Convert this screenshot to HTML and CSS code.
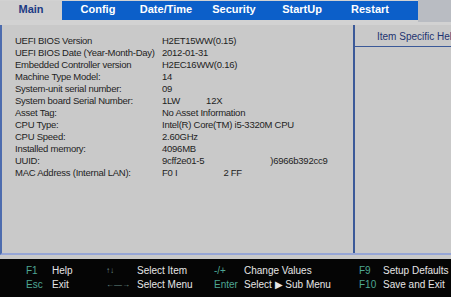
FILE: index.html
```html
<!DOCTYPE html>
<html lang="en">
<head>
    <meta charset="UTF-8">
    <title>BIOS Setup Utility</title>
    <link rel="stylesheet" href="styles.css">
</head>
<body>
    <div class="screen">
        <div class="tabbar">
            <div class="tab active">Main</div>
            <div class="tab-group">
                <div class="tab">Config</div>
                <div class="tab">Date/Time</div>
                <div class="tab">Security</div>
                <div class="tab">StartUp</div>
                <div class="tab">Restart</div>
            </div>
            <div class="tab-rest"></div>
        </div>

        <div class="panel">
            <div class="info">
                <div class="row"><span class="label">UEFI BIOS Version</span><span class="value">H2ET15WW(0.15)</span></div>
                <div class="row"><span class="label">UEFI BIOS Date (Year-Month-Day)</span><span class="value">2012-01-31</span></div>
                <div class="row"><span class="label">Embedded Controller version</span><span class="value">H2EC16WW(0.16)</span></div>
                <div class="row"><span class="label">Machine Type Model:</span><span class="value">14</span></div>
                <div class="row"><span class="label">System-unit serial number:</span><span class="value">09</span></div>
                <div class="row"><span class="label">System board Serial Number:</span><span class="value">1LW<span class="gap g1">12X</span></span></div>
                <div class="row"><span class="label">Asset Tag:</span><span class="value">No Asset Information</span></div>
                <div class="row"><span class="label">CPU Type:</span><span class="value">Intel(R) Core(TM) i5-3320M CPU</span></div>
                <div class="row"><span class="label">CPU Speed:</span><span class="value">2.60GHz</span></div>
                <div class="row"><span class="label">Installed memory:</span><span class="value">4096MB</span></div>
                <div class="row"><span class="label">UUID:</span><span class="value">9cff2e01-5<span class="gap g2">)6966b392cc9</span></span></div>
                <div class="row"><span class="label">MAC Address (Internal LAN):</span><span class="value">F0 I<span class="gap g3">2 FF</span></span></div>
            </div>
            <div class="help">
                <div class="help-title">Item Specific Help</div>
            </div>
        </div>

        <div class="footer">
            <div class="keys">
                <div class="key-col">
                    <div class="key-row"><span class="key">F1</span><span class="act">Help</span></div>
                    <div class="key-row"><span class="key">Esc</span><span class="act">Exit</span></div>
                </div>
                <div class="key-col c2">
                    <div class="key-row"><span class="key arrow">&#8593;&#8595;</span><span class="act">Select Item</span></div>
                    <div class="key-row"><span class="key arrow">&#8592;&#8212;&#8594;</span><span class="act">Select Menu</span></div>
                </div>
                <div class="key-col c3">
                    <div class="key-row"><span class="key">-/+</span><span class="act">Change Values</span></div>
                    <div class="key-row"><span class="key">Enter</span><span class="act">Select &#9654; Sub Menu</span></div>
                </div>
                <div class="key-col c4">
                    <div class="key-row"><span class="key">F9</span><span class="act">Setup Defaults</span></div>
                    <div class="key-row"><span class="key">F10</span><span class="act">Save and Exit</span></div>
                </div>
            </div>
        </div>
    </div>
</body>
</html>
```

FILE: styles.css
```css
* {
    margin: 0;
    padding: 0;
    box-sizing: border-box;
}

body {
    font-family: "Liberation Sans", Arial, sans-serif;
    background: #c9c9c9;
    width: 451px;
    height: 297px;
    overflow: hidden;
}

.screen {
    display: flex;
    flex-direction: column;
    height: 297px;
}

/* top menu */
.tabbar {
    display: flex;
    flex-shrink: 0;
    height: 25px;
    background: #d2d2d2;
}

.tab {
    font-size: 11px;
    font-weight: bold;
    color: #ffffff;
    height: 19px;
    line-height: 17px;
    text-align: center;
    width: 68px;
}

.tab.active {
    width: 62px;
    color: #1c3b84;
    background: #cfcfcf;
    margin-top: 1px;
}

.tab-group {
    display: flex;
    background: #0c5fc9;
    height: 19px;
    margin-top: 1px;
    width: 356px;
    padding-left: 2px;
}

.tab-rest {
    flex: 1;
    background: #b9bcc2;
    height: 22px;
}

/* main panel */
.panel {
    display: flex;
    flex-shrink: 0;
    height: 230px;
    border-left: 2px solid #4d6cae;
    border-bottom: 2px solid #97a6d6;
    background: #c9c9c9;
}

.info {
    width: 353px;
    flex-shrink: 0;
    border-right: 2px solid #3b5998;
    padding: 10px 0 0 13px;
}

.row {
    display: flex;
    font-size: 9.5px;
    line-height: 12px;
    color: #1e1e1e;
    white-space: nowrap;
    letter-spacing: -0.25px;
}

.label {
    width: 147px;
    flex-shrink: 0;
}

.gap {
    display: inline-block;
}

.g1 { margin-left: 26px; }
.g2 { margin-left: 66px; }
.g3 { margin-left: 46px; }

.help {
    flex: 1;
    min-width: 0;
}

.help-title {
    height: 22px;
    border-bottom: 1px solid #3b5998;
    font-size: 10px;
    color: #1d3370;
    padding: 6px 0 0 22px;
    white-space: nowrap;
    overflow: hidden;
}

/* key legend */
.footer {
    flex: 1;
    margin-top: 4px;
    background: #050505;
    padding: 5px 0 0 0;
}

.keys {
    display: flex;
    white-space: nowrap;
}

.key-col {
    display: flex;
    flex-direction: column;
    flex-shrink: 0;
    width: 94px;
    padding-left: 26px;
}

.key-row {
    display: flex;
    font-size: 10px;
    line-height: 14px;
}

.key {
    color: #4ea793;
    width: 26px;
    flex-shrink: 0;
}

.act {
    color: #e6e6e6;
}

.key-col.c2 {
    width: 112px;
    padding-left: 12px;
}

.key-col.c2 .key {
    width: 31px;
    font-size: 8px;
    color: #6e8f8a;
}

.key-col.c3 {
    width: 143px;
    padding-left: 8px;
}

.key-col.c3 .key {
    width: 30px;
}

.key-col.c4 {
    width: 100px;
    padding-left: 10px;
}

.key-col.c4 .key {
    width: 24px;
}
```
